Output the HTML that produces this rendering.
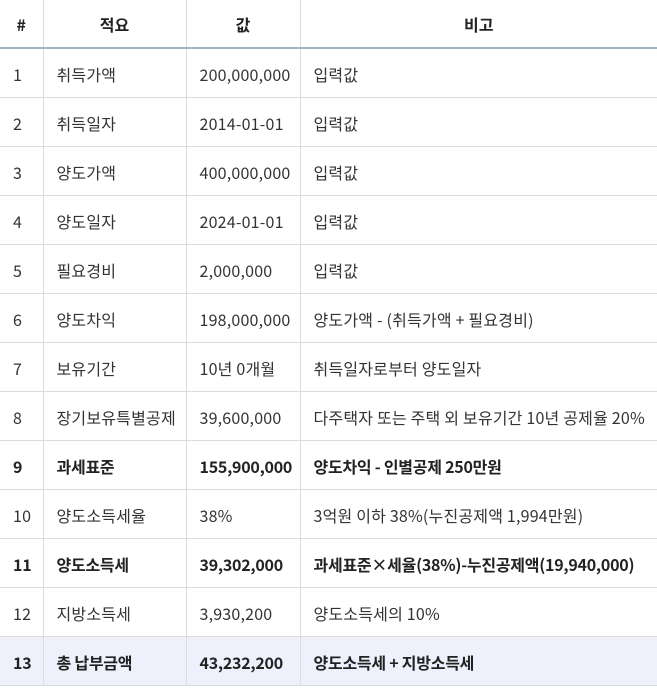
<!DOCTYPE html><html><head><meta charset="utf-8"><style>
body{margin:0;background:#fff;font-family:"Noto Sans CJK KR","Liberation Sans",sans-serif;color:#333;font-size:16px}
table{border-collapse:collapse;width:657px;table-layout:fixed}
td,th{border:1px solid #dcdcdc;height:46px;padding:2px 0 0 13px;text-align:left;white-space:nowrap;overflow:hidden;line-height:20px;letter-spacing:0.2px}
th{text-align:center;padding:0;height:47px;font-weight:bold;color:#222;border-top:none;border-bottom:2px solid #9fb2c9;letter-spacing:0}
tr td:first-child,tr th:first-child{border-left:none}
tr td:last-child,tr th:last-child{border-right:none}
.b td{font-weight:bold;color:#222;letter-spacing:-0.25px}
.t td{background:#eef0fc}
</style></head><body><table>
<colgroup><col style="width:43px"><col style="width:143px"><col style="width:114px"><col style="width:357px"></colgroup>
<tr><th>#</th><th>적요</th><th>값</th><th>비고</th></tr>
<tr><td>1</td><td>취득가액</td><td>200,000,000</td><td>입력값</td></tr>
<tr><td>2</td><td>취득일자</td><td>2014-01-01</td><td>입력값</td></tr>
<tr><td>3</td><td>양도가액</td><td>400,000,000</td><td>입력값</td></tr>
<tr><td>4</td><td>양도일자</td><td>2024-01-01</td><td>입력값</td></tr>
<tr><td>5</td><td>필요경비</td><td>2,000,000</td><td>입력값</td></tr>
<tr><td>6</td><td>양도차익</td><td>198,000,000</td><td>양도가액 - (취득가액 + 필요경비)</td></tr>
<tr><td>7</td><td>보유기간</td><td>10년 0개월</td><td>취득일자로부터 양도일자</td></tr>
<tr><td>8</td><td>장기보유특별공제</td><td>39,600,000</td><td>다주택자 또는 주택 외 보유기간 10년 공제율 20%</td></tr>
<tr class="b"><td>9</td><td>과세표준</td><td>155,900,000</td><td>양도차익 - 인별공제 250만원</td></tr>
<tr><td>10</td><td>양도소득세율</td><td>38%</td><td>3억원 이하 38%(누진공제액 1,994만원)</td></tr>
<tr class="b"><td>11</td><td>양도소득세</td><td>39,302,000</td><td>과세표준×세율(38%)-누진공제액(19,940,000)</td></tr>
<tr><td>12</td><td>지방소득세</td><td>3,930,200</td><td>양도소득세의 10%</td></tr>
<tr class="b t"><td>13</td><td>총 납부금액</td><td>43,232,200</td><td>양도소득세 + 지방소득세</td></tr>
</table></body></html>
